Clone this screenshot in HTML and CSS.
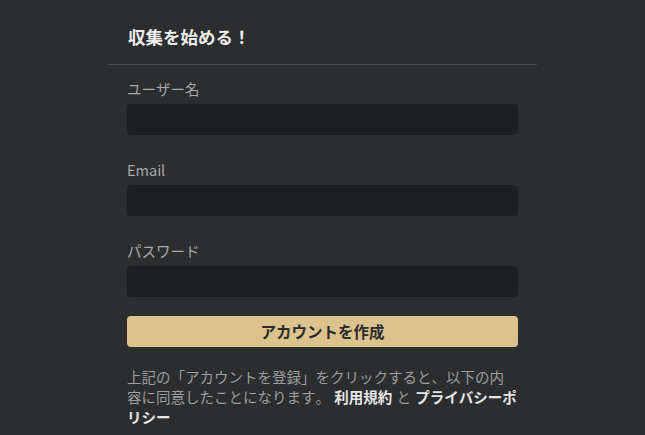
FILE: index.html
```html
<!DOCTYPE html>
<html lang="ja">
<head>
<meta charset="utf-8">
<title>収集を始める！</title>
<link rel="stylesheet" href="styles.css">
</head>
<body>
<div class="card">
  <div class="card-header">
    <h1 class="title">収集を始める！</h1>
  </div>
  <form class="card-body">
    <div class="field">
      <label class="label">ユーザー名</label>
      <input class="input" type="text">
    </div>
    <div class="field">
      <label class="label">Email</label>
      <input class="input" type="email">
    </div>
    <div class="field">
      <label class="label">パスワード</label>
      <input class="input" type="password">
    </div>
    <button class="submit" type="button">アカウントを作成</button>
    <p class="terms">上記の「アカウントを登録」をクリックすると、以下の内容に同意したことになります。 <a class="link">利用規約</a> と <a class="link">プライバシーポリシー</a></p>
  </form>
</div>
</body>
</html>
```

FILE: styles.css
```css
html, body {
  margin: 0;
  padding: 0;
  background: #2b2d2f;
  height: 100%;
}
body {
  font-family: "Noto Sans CJK JP", "Noto Sans", sans-serif;
  font-kerning: none;
  font-feature-settings: "palt" 0, "kern" 0;
  color: #a6a6a6;
  overflow: hidden;
}
.card {
  margin-left: 108px;
  width: 429px;
}
.card-header {
  padding: 24px 20px 14px;
  border-bottom: 1px solid #47494b;
}
.title {
  margin: 0;
  font-size: 17.5px;
  line-height: 26px;
  font-weight: 700;
  color: #ebebeb;
}
.card-body {
  padding: 14px 19px 0;
  display: flex;
  flex-direction: column;
  gap: 25px;
}
.field {
  display: flex;
  flex-direction: column;
  gap: 5px;
}
.label {
  font-size: 14.5px;
  line-height: 20px;
  color: #a9a9a9;
}
.input {
  box-sizing: border-box;
  height: 31px;
  width: 100%;
  margin: 0;
  border: none;
  border-radius: 4px;
  background: #1e1f20;
  outline: none;
}
.submit {
  margin-top: -6px;
  height: 31px;
  width: 100%;
  border: none;
  border-radius: 4px;
  background: #dcc28c;
  color: #2b2b2b;
  font-family: inherit;
  font-size: 15.5px;
  font-weight: 700;
  line-height: 31px;
  padding: 0;
}
.terms {
  margin: -5px 0 0;
  font-size: 14.5px;
  line-height: 20px;
  color: #9d9d9d;
  word-spacing: 1px;
}
.link {
  color: #e6e6e6;
  font-weight: 700;
}
```
